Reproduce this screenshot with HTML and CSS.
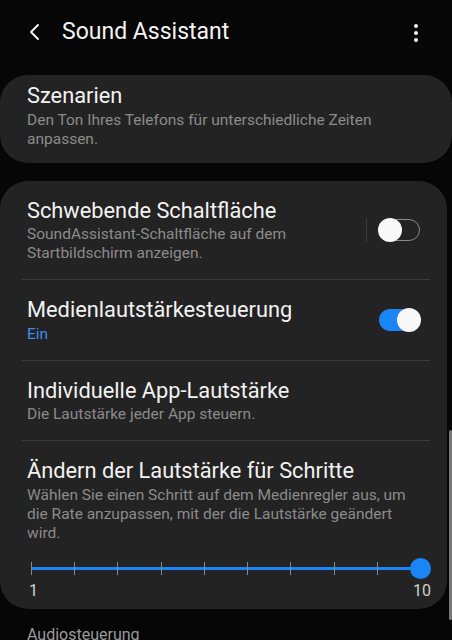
FILE: index.html
```html
<!DOCTYPE html>
<html>
<head>
<meta charset="utf-8">
<link rel="stylesheet" href="styles.css">
</head>
<body>
<div class="screen">
  <header class="appbar">
    <svg class="back" width="14" height="18" viewBox="0 0 14 18"><path d="M10 2 L3 9 L10 16" fill="none" stroke="#f2f2f2" stroke-width="2" stroke-linecap="round" stroke-linejoin="round"/></svg>
    <h1 class="title">Sound Assistant</h1>
    <svg class="more" width="6" height="20" viewBox="0 0 6 20"><circle cx="3" cy="3" r="2" fill="#f2f2f2"/><circle cx="3" cy="10" r="2" fill="#f2f2f2"/><circle cx="3" cy="17" r="2" fill="#f2f2f2"/></svg>
  </header>

  <section class="card card-first">
    <div class="item">
      <div class="item-text">
        <div class="item-title">Szenarien</div>
        <div class="item-sub">Den Ton Ihres Telefons für unterschiedliche Zeiten anpassen.</div>
      </div>
    </div>
  </section>

  <section class="card card-main">
    <div class="item row">
      <div class="item-text">
        <div class="item-title">Schwebende Schaltfläche</div>
        <div class="item-sub">SoundAssistant-Schaltfläche auf dem<br>Startbildschirm anzeigen.</div>
      </div>
      <div class="vsep"></div>
      <div class="switch off"><span class="knob"></span></div>
    </div>
    <div class="divider"></div>
    <div class="item row">
      <div class="item-text">
        <div class="item-title">Medienlautstärkesteuerung</div>
        <div class="item-sub blue">Ein</div>
      </div>
      <div class="switch on"><span class="knob"></span></div>
    </div>
    <div class="divider"></div>
    <div class="item">
      <div class="item-text">
        <div class="item-title">Individuelle App-Lautstärke</div>
        <div class="item-sub">Die Lautstärke jeder App steuern.</div>
      </div>
    </div>
    <div class="divider"></div>
    <div class="item item-slider">
      <div class="item-text">
        <div class="item-title">Ändern der Lautstärke für Schritte</div>
        <div class="item-sub">Wählen Sie einen Schritt auf dem Medienregler aus, um die Rate anzupassen, mit der die Lautstärke geändert wird.</div>
      </div>
      <div class="slider">
        <div class="track">
          <span class="tick"></span><span class="tick"></span><span class="tick"></span><span class="tick"></span><span class="tick"></span><span class="tick"></span><span class="tick"></span><span class="tick"></span><span class="tick"></span><span class="tick last"></span>
          <span class="thumb"></span>
        </div>
        <div class="slider-labels"><span>1</span><span>10</span></div>
      </div>
    </div>
  </section>

  <div class="section-label">Audiosteuerung</div>
  <div class="scrollbar"></div>
</div>
</body>
</html>
```

FILE: styles.css
```css
* { box-sizing: border-box; }
html, body { margin: 0; padding: 0; }
body {
  background: #060606;
  font-family: Roboto, "Noto Sans", sans-serif;
  color: #f0f0f0;
  width: 452px;
  height: 640px;
  overflow: hidden;
}
.screen { position: relative; height: 640px; }
.appbar {
  height: 75px;
  display: flex;
  align-items: flex-start;
  padding: 22px 0 0 28px;
}
.back { margin-top: 1px; }
.title {
  margin: 0 0 0 20px;
  font-weight: 400;
  font-size: 23px;
  line-height: 20px;
  color: #f4f4f4;
  flex: 1;
}
.more { margin-right: 33px; margin-top: 1px; }

.card {
  background: #232323;
  border-radius: 28px;
}
.card-first {
  width: 452px;
  padding: 8px 0 14px;
}
.card-main {
  width: 447px;
  margin-top: 18px;
  padding: 17px 0 8px;
}
.item { padding: 0 27px; }
.row { display: flex; align-items: center; }
.row .item-text { flex: 1; }
.item-title {
  font-size: 21.8px;
  line-height: 26px;
  color: #f2f2f2;
}
.item-sub {
  font-size: 15.5px;
  line-height: 19px;
  color: #8b8b8b;
  margin-top: 1.5px;
}
.item-sub.blue { color: #3a8ef0; }
.divider {
  height: 1px;
  background: #393939;
  margin: 16px 17px 17px 22px;
}
.vsep {
  width: 1px;
  height: 24px;
  background: #3a3a3a;
  margin-right: 12px;
}
.switch {
  position: relative;
  width: 41px;
  height: 22px;
  border-radius: 11px;
}
.switch.off { border: 1.5px solid #8a8a8a; }
.switch.on { background: #1a86f5; }
.knob {
  position: absolute;
  top: -1px;
  width: 24px;
  height: 24px;
  border-radius: 50%;
  background: #f8f8f8;
}
.switch.off .knob { left: -2px; top: -2.5px; }
.switch.on .knob { right: -1px; }

.slider { padding: 24px 4px 0 4px; }
.track {
  position: relative;
  height: 3px;
  background: #1a86f5;
  display: flex;
  justify-content: space-between;
  align-items: center;
  width: 390px;
}
.tick {
  width: 1px;
  height: 13px;
  background: #8a8a8a;
}
.tick.last { opacity: 0; }
.thumb {
  position: absolute;
  right: -10px;
  top: -9px;
  width: 21px;
  height: 21px;
  border-radius: 50%;
  background: #1a86f5;
}
.slider-labels {
  display: flex;
  justify-content: space-between;
  width: 402px;
  margin-left: -2px;
  font-size: 16px;
  line-height: 20px;
  color: #d0d0d0;
  margin-top: 11px;
}
.section-label {
  padding: 16px 0 0 27px;
  font-size: 16px;
  color: #9a9a9a;
}
.scrollbar {
  position: absolute;
  right: 0;
  top: 430px;
  width: 3px;
  height: 190px;
  background: #777;
  border-radius: 2px;
}
```
